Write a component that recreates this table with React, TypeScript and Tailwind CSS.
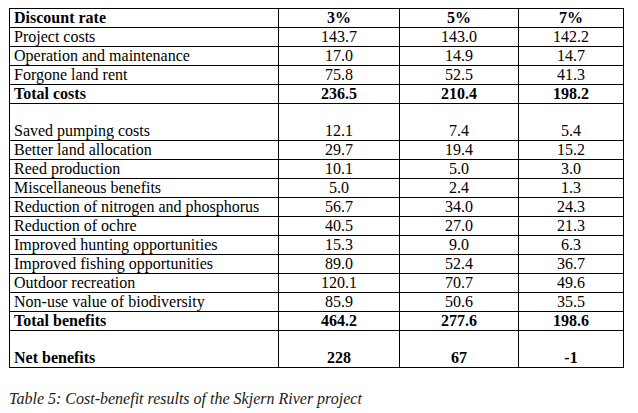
const rows: { label: string; v: string[]; bold?: boolean; tall?: boolean }[] = [
  { label: "Discount rate", v: ["3%", "5%", "7%"], bold: true },
  { label: "Project costs", v: ["143.7", "143.0", "142.2"] },
  { label: "Operation and maintenance", v: ["17.0", "14.9", "14.7"] },
  { label: "Forgone land rent", v: ["75.8", "52.5", "41.3"] },
  { label: "Total costs", v: ["236.5", "210.4", "198.2"], bold: true },
  { label: "Saved pumping costs", v: ["12.1", "7.4", "5.4"], tall: true },
  { label: "Better land allocation", v: ["29.7", "19.4", "15.2"] },
  { label: "Reed production", v: ["10.1", "5.0", "3.0"] },
  { label: "Miscellaneous benefits", v: ["5.0", "2.4", "1.3"] },
  { label: "Reduction of nitrogen and phosphorus", v: ["56.7", "34.0", "24.3"] },
  { label: "Reduction of ochre", v: ["40.5", "27.0", "21.3"] },
  { label: "Improved hunting opportunities", v: ["15.3", "9.0", "6.3"] },
  { label: "Improved fishing opportunities", v: ["89.0", "52.4", "36.7"] },
  { label: "Outdoor recreation", v: ["120.1", "70.7", "49.6"] },
  { label: "Non-use value of biodiversity", v: ["85.9", "50.6", "35.5"] },
  { label: "Total benefits", v: ["464.2", "277.6", "198.6"], bold: true },
  { label: "Net benefits", v: ["228", "67", "-1"], bold: true, tall: true },
];

export default function App() {
  return (
    <div className="w-[638px] h-[413px] bg-white pt-[8px] pl-[9px] text-black [font-family:'Liberation_Serif',serif]">
      <table className="table-fixed border-collapse w-[614px] text-[16px] leading-[18px] [font-family:'Liberation_Serif',serif]">
        <colgroup>
          <col className="w-[269px]" />
          <col className="w-[121px]" />
          <col className="w-[119px]" />
          <col className="w-[105px]" />
        </colgroup>
        <tbody>
          {rows.map((r) => (
            <tr key={r.label} className={r.tall ? "h-[37px]" : "h-[19px]"}>
              <td
                className={`border border-black px-[4px] py-0 align-bottom whitespace-nowrap ${
                  r.bold ? "font-bold" : ""
                }`}
              >
                {r.label}
              </td>
              {r.v.map((x, i) => (
                <td
                  key={i}
                  className={`border border-black p-0 text-center align-bottom ${
                    r.bold ? "font-bold" : ""
                  }`}
                >
                  {x}
                </td>
              ))}
            </tr>
          ))}
        </tbody>
      </table>
      <p className="mt-[22px] italic text-[16px] leading-[18px] text-[#1a1a1a]">
        Table 5: Cost-benefit results of the Skjern River project
      </p>
    </div>
  );
}
